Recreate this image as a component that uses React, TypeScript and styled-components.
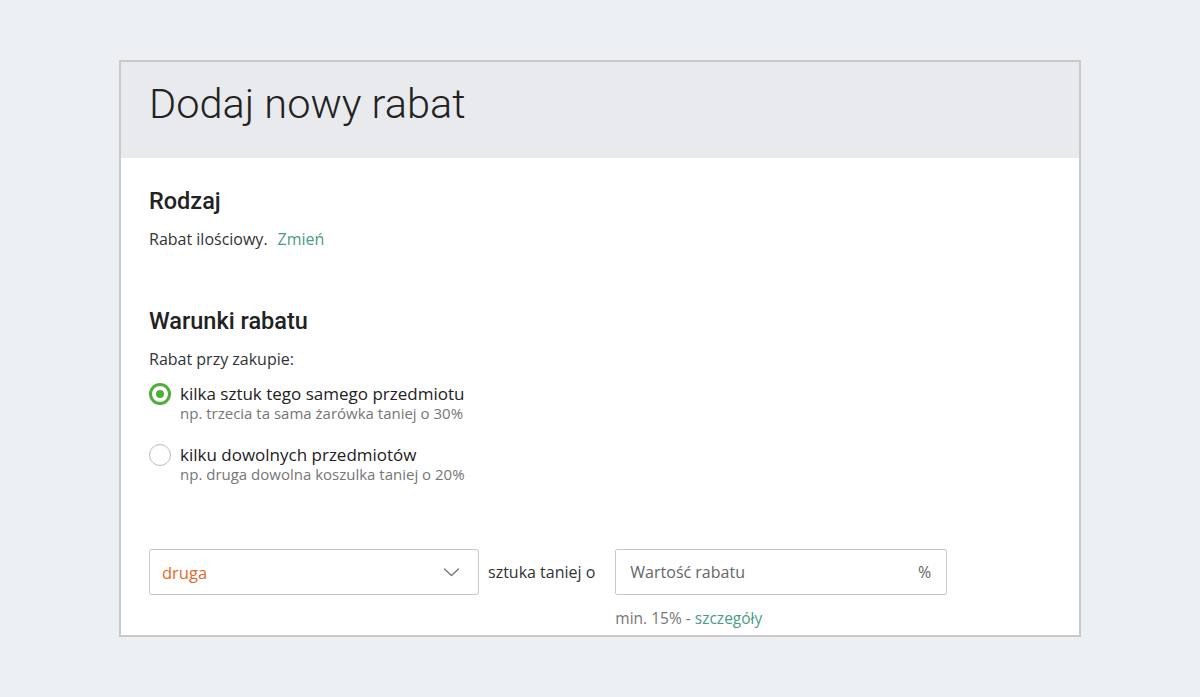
import styled, { createGlobalStyle } from 'styled-components';

const GlobalStyle = createGlobalStyle`
  html, body {
    margin: 0;
    padding: 0;
    background: #edf0f3;
  }
  body {
    font-family: 'Open Sans', 'Liberation Sans', sans-serif;
    color: #333;
  }
`;

const Page = styled.div`
  width: 1200px;
  height: 697px;
  box-sizing: border-box;
  padding: 60px 119px 0;
`;

const Card = styled.div`
  background: #fff;
  border: 2px solid #c9c9c9;
  height: 577px;
  box-sizing: border-box;
  overflow: hidden;
`;

const Header = styled.div`
  background: #e9eaee;
  height: 96px;
  box-sizing: border-box;
  padding: 18px 28px 0;
`;

const Title = styled.h1`
  margin: 0;
  font-family: Roboto, 'Liberation Sans', sans-serif;
  font-weight: 300;
  font-size: 41.5px;
  line-height: 48px;
  color: #222;
`;

const Body = styled.div`
  padding: 28px 28px 0;
`;

const Section = styled.section`
  & + & {
    margin-top: 56px;
  }
`;

const SectionTitle = styled.h2`
  margin: 0 0 12px;
  font-family: Roboto, 'Liberation Sans', sans-serif;
  font-weight: 500;
  font-size: 23.5px;
  line-height: 30px;
  color: #222;
`;

const Text = styled.p`
  margin: 0;
  font-size: 16px;
  line-height: 22px;
  color: #333;
`;

const Link = styled.a<{ $gap?: number }>`
  color: #4c9c7e;
  text-decoration: none;
  cursor: pointer;
  margin-left: ${(p) => p.$gap ?? 0}px;
`;

const Options = styled.div`
  display: flex;
  flex-direction: column;
  gap: 23px;
  margin-top: 13px;
`;

const Option = styled.label`
  display: flex;
  align-items: flex-start;
  gap: 9px;
  cursor: pointer;
`;

const Radio = styled.span<{ $checked?: boolean }>`
  flex: none;
  width: 22px;
  height: 22px;
  box-sizing: border-box;
  border-radius: 50%;
  border: ${(p) => (p.$checked ? '3px solid #4fae35' : '1px solid #bdbdbd')};
  background: #fff;
  display: flex;
  align-items: center;
  justify-content: center;
  &::after {
    content: '';
    display: ${(p) => (p.$checked ? 'block' : 'none')};
    width: 8px;
    height: 8px;
    border-radius: 50%;
    background: #4fae35;
  }
`;

const OptionText = styled.div`
  display: flex;
  flex-direction: column;
`;

const OptionLabel = styled.span`
  font-size: 17px;
  line-height: 22px;
  color: #222;
`;

const OptionHint = styled.span`
  font-size: 15px;
  line-height: 16px;
  color: #767676;
`;

const FormRow = styled.div`
  display: flex;
  align-items: flex-start;
  margin-top: 67px;
`;

const Select = styled.div`
  width: 330px;
  height: 46px;
  box-sizing: border-box;
  border: 1px solid #c8c8c8;
  border-radius: 2px;
  display: flex;
  align-items: center;
  justify-content: space-between;
  padding: 0 18px 0 12px;
  font-size: 16.5px;
  color: #e4682a;
`;

const RowLabel = styled.span`
  height: 46px;
  display: flex;
  align-items: center;
  padding: 0 20px 0 9px;
  font-size: 16px;
  color: #333;
`;

const Field = styled.div`
  display: flex;
  flex-direction: column;
`;

const InputBox = styled.div`
  width: 332px;
  height: 46px;
  box-sizing: border-box;
  border: 1px solid #c8c8c8;
  border-radius: 2px;
  display: flex;
  align-items: center;
  justify-content: space-between;
  padding: 0 15px 0 14px;
  font-size: 16px;
  color: #666;
`;

const Hint = styled.span`
  margin-top: 13px;
  font-size: 15.5px;
  line-height: 20px;
  color: #767676;
`;

const Chevron = () => (
  <svg width="17" height="10" viewBox="0 0 17 10" fill="none">
    <path d="M1.5 2 L8.5 8.5 L15.5 2" stroke="#777" strokeWidth="1.4" strokeLinecap="round" strokeLinejoin="round" />
  </svg>
);

export default function App() {
  return (
    <>
      <GlobalStyle />
      <Page>
        <Card>
          <Header>
            <Title>Dodaj nowy rabat</Title>
          </Header>
          <Body>
            <Section>
              <SectionTitle>Rodzaj</SectionTitle>
              <Text>
                Rabat ilościowy.<Link $gap={10}>Zmień</Link>
              </Text>
            </Section>
            <Section>
              <SectionTitle>Warunki rabatu</SectionTitle>
              <Text>Rabat przy zakupie:</Text>
              <Options>
                <Option>
                  <Radio $checked />
                  <OptionText>
                    <OptionLabel>kilka sztuk tego samego przedmiotu</OptionLabel>
                    <OptionHint>np. trzecia ta sama żarówka taniej o 30%</OptionHint>
                  </OptionText>
                </Option>
                <Option>
                  <Radio />
                  <OptionText>
                    <OptionLabel>kilku dowolnych przedmiotów</OptionLabel>
                    <OptionHint>np. druga dowolna koszulka taniej o 20%</OptionHint>
                  </OptionText>
                </Option>
              </Options>
            </Section>
            <FormRow>
              <Select>
                <span>druga</span>
                <Chevron />
              </Select>
              <RowLabel>sztuka taniej o</RowLabel>
              <Field>
                <InputBox>
                  <span>Wartość rabatu</span>
                  <span>%</span>
                </InputBox>
                <Hint>
                  min. 15% - <Link>szczegóły</Link>
                </Hint>
              </Field>
            </FormRow>
          </Body>
        </Card>
      </Page>
    </>
  );
}
